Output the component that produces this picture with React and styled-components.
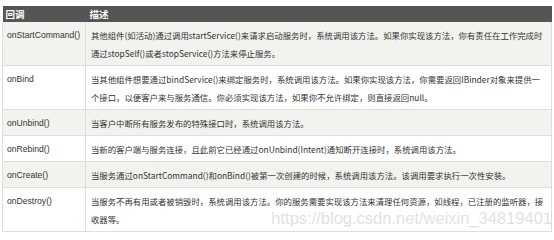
import styled, { createGlobalStyle } from 'styled-components';

const rows = [
  {
    name: 'onStartCommand()',
    desc: '其他组件(如活动)通过调用startService()来请求启动服务时，系统调用该方法。如果你实现该方法，你有责任在工作完成时通过stopSelf()或者stopService()方法来停止服务。',
  },
  {
    name: 'onBind',
    desc: '当其他组件想要通过bindService()来绑定服务时，系统调用该方法。如果你实现该方法，你需要返回IBinder对象来提供一个接口，以便客户来与服务通信。你必须实现该方法，如果你不允许绑定，则直接返回null。',
  },
  { name: 'onUnbind()', desc: '当客户中断所有服务发布的特殊接口时，系统调用该方法。' },
  {
    name: 'onRebind()',
    desc: '当新的客户端与服务连接，且此前它已经通过onUnbind(Intent)通知断开连接时，系统调用该方法。',
  },
  {
    name: 'onCreate()',
    desc: '当服务通过onStartCommand()和onBind()被第一次创建的时候，系统调用该方法。该调用要求执行一次性安装。',
  },
  {
    name: 'onDestroy()',
    desc: '当服务不再有用或者被销毁时，系统调用该方法。你的服务需要实现该方法来清理任何资源，如线程，已注册的监听器，接收器等。',
  },
];

const GlobalStyle = createGlobalStyle`
  body {
    margin: 0;
    background: #fff;
  }
`;

const Page = styled.div`
  position: relative;
  padding: 6px 2px 0 2px;
  width: 550px;
`;

const Table = styled.table`
  width: 550px;
  border-collapse: collapse;
  table-layout: fixed;
  font-family: 'Liberation Sans', 'Noto Sans CJK SC', sans-serif;
  color: #333;
`;

const HeadCell = styled.th`
  background: #555;
  color: #fff;
  font-family: 'Noto Sans CJK SC', sans-serif;
  font-size: 9.5px;
  font-weight: 700;
  text-align: left;
  height: 16px;
  padding: 0 0 0 ${(p) => (p.$first ? 3 : 4)}px;
  line-height: 16px;
  width: ${(p) => (p.$first ? '80px' : 'auto')};
`;

const Row = styled.tr`
  background: ${(p) => (p.$shaded ? '#f2f2ef' : '#fff')};
  border-bottom: 1px solid #ddd;
`;

const NameCell = styled.td`
  vertical-align: top;
  font-size: 8.6px;
  line-height: 18px;
  padding: 4px 0 3px 4px;
  border-left: 1px solid #ddd;
  border-right: 1px solid #ddd;
  white-space: nowrap;
`;

const DescCell = styled.td`
  vertical-align: top;
  font-family: 'Noto Sans CJK SC', sans-serif;
  font-size: 8.4px;
  line-height: 18px;
  padding: 4px 4px 3px 5px;
  border-right: 1px solid #ddd;
`;

const Watermark = styled.div`
  position: absolute;
  right: 2px;
  bottom: 4px;
  font-family: 'Liberation Sans', sans-serif;
  font-size: 16.5px;
  color: rgba(205, 205, 205, 0.6);
  pointer-events: none;
`;

export default function App() {
  return (
    <>
      <GlobalStyle />
      <Page>
        <Table>
          <thead>
            <tr>
              <HeadCell $first>回调</HeadCell>
              <HeadCell>描述</HeadCell>
            </tr>
          </thead>
          <tbody>
            {rows.map((r, i) => (
              <Row key={r.name} $shaded={i % 2 === 0}>
                <NameCell>{r.name}</NameCell>
                <DescCell>{r.desc}</DescCell>
              </Row>
            ))}
          </tbody>
        </Table>
        <Watermark>https://blog.csdn.net/weixin_34819401</Watermark>
      </Page>
    </>
  );
}
